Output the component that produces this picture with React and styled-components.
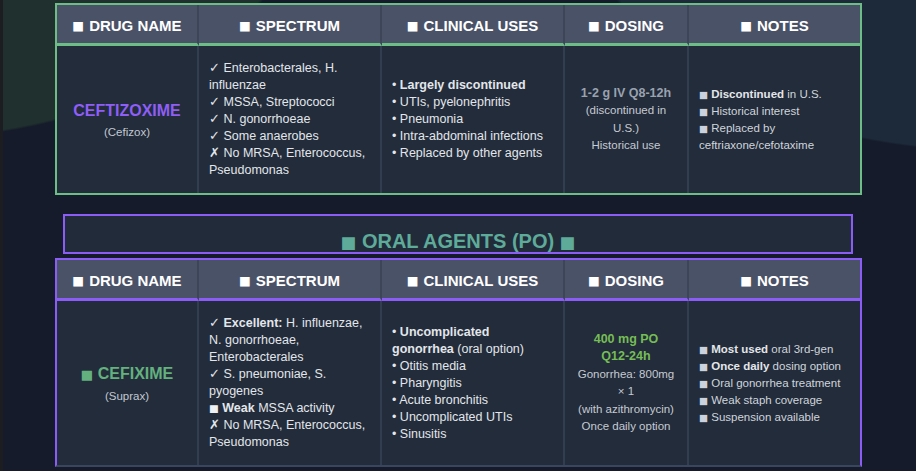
import React from "react";
import styled, { createGlobalStyle } from "styled-components";

const GlobalStyle = createGlobalStyle`
  html, body {
    margin: 0;
    padding: 0;
  }
  body {
    background-color: #151b2a;
    background-image:
      radial-gradient(ellipse 400px 240px at -100px -100px, #1f302f 99%, transparent 100%),
      radial-gradient(ellipse 400px 212px at 1000px -60px, #1d2a3a 99%, transparent 100%);
    background-repeat: no-repeat;
    font-family: "Liberation Sans", Arial, sans-serif;
    overflow: hidden;
  }
`;

const Page = styled.div`
  min-height: 471px;
  box-sizing: border-box;
  border-left: 3px solid #1c1d20;
  padding: 3px 0 0 52px;
`;

const Wrapper = styled.div`
  width: 807px;
  display: flex;
  flex-direction: column;
`;

const Table = styled.div`
  box-sizing: border-box;
  width: 807px;
  display: grid;
  grid-template-columns: 142px 183px 183px 124px 1fr;
  border: 2px solid ${({ $accent }) => $accent};
  border-bottom-color: ${({ $bottom, $accent }) => $bottom || $accent};
  background: #222c3a;
`;

const HeadCell = styled.div`
  box-sizing: border-box;
  height: 41px;
  padding-top: 3px;
  display: flex;
  align-items: center;
  justify-content: center;
  gap: 5px;
  background: #4a5268;
  color: #ffffff;
  font-size: 15px;
  font-weight: 700;
  border-bottom: 3px solid ${({ $accent }) => $accent};
  border-right: ${({ $last }) => ($last ? "none" : "2px solid #3d4558")};
`;

const Cell = styled.div`
  box-sizing: border-box;
  padding: 14px 10px;
  display: flex;
  flex-direction: column;
  justify-content: center;
  color: #e3e6eb;
  font-size: 12.5px;
  line-height: 17px;
  border-right: ${({ $last }) => ($last ? "none" : "2px solid #323d50")};
`;

const NameCell = styled(Cell)`
  align-items: center;
  text-align: center;
  padding-top: 17px;
`;

const DrugName = styled.div`
  color: ${({ $color }) => $color};
  font-size: 16px;
  font-weight: 700;
  line-height: 20px;
`;

const Brand = styled.div`
  margin-top: 2px;
  color: #c3c8d2;
  font-size: 11.5px;
  line-height: 18px;
`;

const Line = styled.div``;

const DoseCell = styled(Cell)`
  align-items: center;
  text-align: center;
  line-height: 17.5px;
`;

const DoseMain = styled.div`
  color: ${({ $color }) => $color};
  font-size: 12.5px;
  font-weight: 700;
`;

const DoseNote = styled.div`
  color: #c6cad3;
  font-size: 11.5px;
`;

const NoteCell = styled(Cell)`
  color: #d0d4dc;
  font-size: 11.5px;
  line-height: 16px;
`;

const Sq = styled.span`
  font-family: "DejaVu Sans", sans-serif;
  font-weight: 400;
  font-size: 0.83em;
  color: ${({ $color }) => $color || "inherit"};
`;

const Strong = styled.b`
  color: ${({ $color }) => $color || "inherit"};
`;

const SectionTitle = styled.h2`
  box-sizing: border-box;
  height: 40px;
  margin: 19px 9px 4px 8px;
  padding-top: 13px;
  border: 2px solid #8b5cf6;
  background: #222b3a;
  color: #5eab9a;
  font-size: 20px;
  font-weight: 700;
  line-height: 24px;
  text-align: center;
`;

const columns = ["DRUG NAME", "SPECTRUM", "CLINICAL USES", "DOSING", "NOTES"];

const Header = ({ accent }) =>
  columns.map((c, i) => (
    <HeadCell key={c} $accent={accent} $last={i === columns.length - 1}>
      <Sq>■</Sq>
      <span>{c}</span>
    </HeadCell>
  ));

const GREEN = "#6dbd87";
const PURPLE = "#8b5cf6";
const BULLET = "#ccd1de";

const Note = ({ children }) => (
  <Line>
    <Sq $color={BULLET}>■</Sq> {children}
  </Line>
);

export default function App() {
  return (
    <>
      <GlobalStyle />
      <Page>
        <Wrapper>
          <Table $accent={GREEN}>
            <Header accent={GREEN} />
            <NameCell>
              <DrugName $color="#8f5ef7">CEFTIZOXIME</DrugName>
              <Brand>(Cefizox)</Brand>
            </NameCell>
            <Cell>
              <Line>✓ Enterobacterales, H. influenzae</Line>
              <Line>✓ MSSA, Streptococci</Line>
              <Line>✓ N. gonorrhoeae</Line>
              <Line>✓ Some anaerobes</Line>
              <Line>✗ No MRSA, Enterococcus, Pseudomonas</Line>
            </Cell>
            <Cell>
              <Line>• <Strong>Largely discontinued</Strong></Line>
              <Line>• UTIs, pyelonephritis</Line>
              <Line>• Pneumonia</Line>
              <Line>• Intra-abdominal infections</Line>
              <Line>• Replaced by other agents</Line>
            </Cell>
            <DoseCell>
              <DoseMain $color="#9aa2b0">1-2 g IV Q8-12h</DoseMain>
              <DoseNote>(discontinued in U.S.)</DoseNote>
              <DoseNote>Historical use</DoseNote>
            </DoseCell>
            <NoteCell $last>
              <Note><Strong $color="#e4e6ea">Discontinued</Strong> in U.S.</Note>
              <Note>Historical interest</Note>
              <Note>Replaced by ceftriaxone/cefotaxime</Note>
            </NoteCell>
          </Table>

          <SectionTitle>
            <Sq>■</Sq> ORAL AGENTS (PO) <Sq>■</Sq>
          </SectionTitle>

          <Table $accent={PURPLE} $bottom="#3a4660">
            <Header accent={PURPLE} />
            <NameCell>
              <DrugName $color="#62b17e"><Sq>■</Sq> CEFIXIME</DrugName>
              <Brand>(Suprax)</Brand>
            </NameCell>
            <Cell>
              <Line>✓ <Strong>Excellent:</Strong> H. influenzae, N. gonorrhoeae, Enterobacterales</Line>
              <Line>✓ S. pneumoniae, S. pyogenes</Line>
              <Line><Sq $color="#eef0f4">■</Sq> <Strong>Weak</Strong> MSSA activity</Line>
              <Line>✗ No MRSA, Enterococcus, Pseudomonas</Line>
            </Cell>
            <Cell>
              <Line>• <Strong>Uncomplicated gonorrhea</Strong> (oral option)</Line>
              <Line>• Otitis media</Line>
              <Line>• Pharyngitis</Line>
              <Line>• Acute bronchitis</Line>
              <Line>• Uncomplicated UTIs</Line>
              <Line>• Sinusitis</Line>
            </Cell>
            <DoseCell>
              <DoseMain $color="#76bd55">400 mg PO</DoseMain>
              <DoseMain $color="#76bd55">Q12-24h</DoseMain>
              <DoseNote>Gonorrhea: 800mg × 1</DoseNote>
              <DoseNote>(with azithromycin)</DoseNote>
              <DoseNote>Once daily option</DoseNote>
            </DoseCell>
            <NoteCell $last>
              <Note><Strong $color="#e4e6ea">Most used</Strong> oral 3rd-gen</Note>
              <Note><Strong $color="#e4e6ea">Once daily</Strong> dosing option</Note>
              <Note>Oral gonorrhea treatment</Note>
              <Note>Weak staph coverage</Note>
              <Note>Suspension available</Note>
            </NoteCell>
          </Table>
        </Wrapper>
      </Page>
    </>
  );
}
